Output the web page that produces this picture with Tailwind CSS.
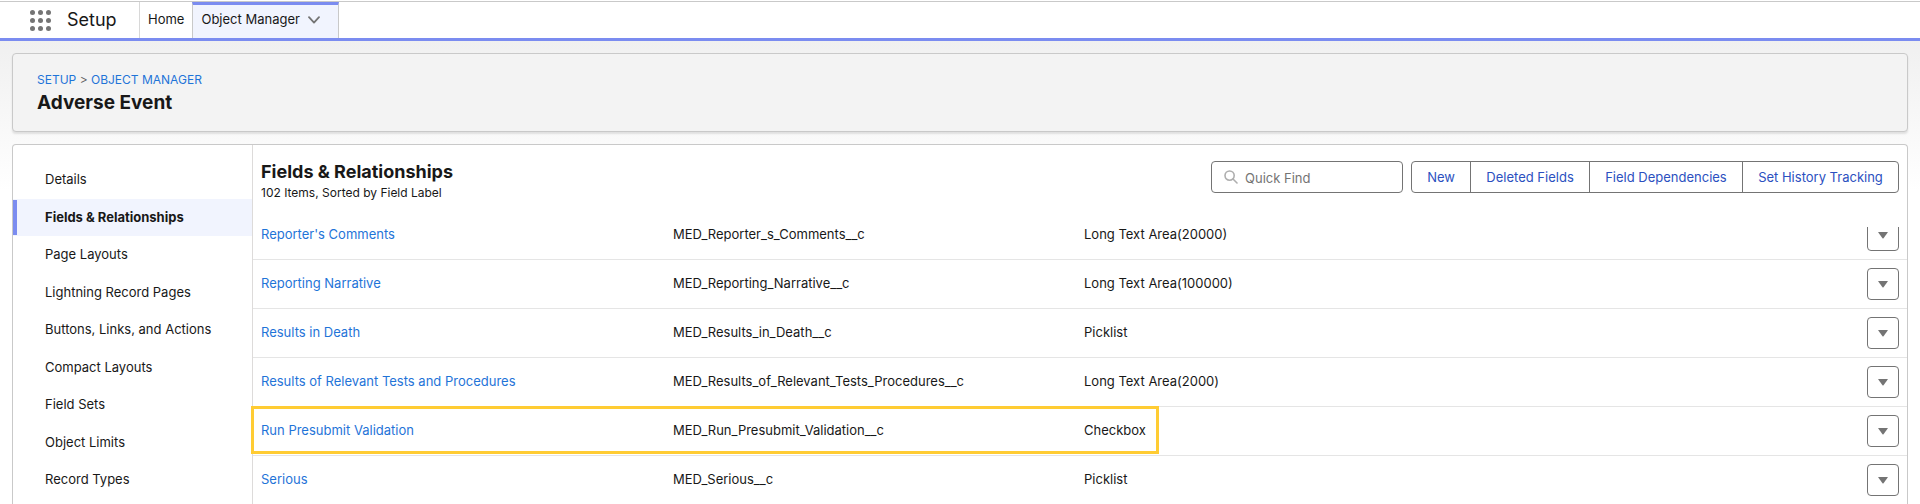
<!DOCTYPE html>
<html lang="en">
<head>
  <meta charset="UTF-8" />
  <meta name="viewport" content="width=device-width, initial-scale=1.0"/>
  <title>Object Manager | Setup</title>
  <script src="https://cdn.jsdelivr.net/npm/@tailwindcss/browser@4"></script>
</head>
<body class="h-screen overflow-hidden flex flex-col bg-white font-[Inter,sans-serif] text-[13px] leading-normal text-[#181818]">
  <!-- Global navigation -->
  <header class="flex h-[41px] shrink-0 items-stretch border-b-3 border-[#7b8cf0] bg-white">
    <div class="flex grow border-t border-[#c9c9c9] mt-px">
      <div class="flex w-[140px] items-center border-r border-[#d8d8d8] pl-[30px]">
        <button type="button" aria-label="App Launcher" class="text-[#747474]">
          <svg width="21" height="21" viewBox="0 0 21 21" fill="currentColor">
            <circle cx="2.5" cy="2.5" r="2.5"/><circle cx="10.5" cy="2.5" r="2.5"/><circle cx="18.5" cy="2.5" r="2.5"/>
            <circle cx="2.5" cy="10.5" r="2.5"/><circle cx="10.5" cy="10.5" r="2.5"/><circle cx="18.5" cy="10.5" r="2.5"/>
            <circle cx="2.5" cy="18.5" r="2.5"/><circle cx="10.5" cy="18.5" r="2.5"/><circle cx="18.5" cy="18.5" r="2.5"/>
          </svg>
        </button>
        <span class="ml-4 pb-px text-[18px]">Setup</span>
      </div>
      <nav class="flex">
        <a href="#" class="flex items-center px-2">Home</a>
        <div class="flex items-center border-x border-t-3 border-x-[#c9c9c9] border-t-[#7b8cf0] bg-[#f1f4fe] pl-2 pr-[18px] pb-[3px]">
          <a href="#">Object Manager</a>
          <button type="button" aria-label="Object Manager menu" class="ml-2 text-[#747474]">
            <svg width="12" height="8" viewBox="0 0 12 8" fill="none" stroke="currentColor" stroke-width="1.8" stroke-linecap="round" stroke-linejoin="round"><path d="M1 1.2 6 6.6 11 1.2"/></svg>
          </button>
        </div>
      </nav>
    </div>
  </header>

  <main class="flex grow flex-col gap-3 bg-linear-to-b from-[#f0f0f0] to-white to-[150px] px-3 pt-3 min-h-0">
    <!-- Page header -->
    <div class="shrink-0 rounded-[4px] border border-[#c9c9c9] bg-[#f3f3f3] px-6 pt-4 pb-[15px] shadow-[0_2px_2px_rgba(0,0,0,0.1)]">
      <div class="text-[12px] leading-5 text-[#5c5c5c]">
        <a href="#" class="text-[#1f74d8]">SETUP</a> &gt; <a href="#" class="text-[#1f74d8]">OBJECT MANAGER</a>
      </div>
      <h1 class="text-[19px] leading-[26px] font-bold">Adverse Event</h1>
    </div>

    <div class="flex shrink-0 rounded-t-[4px] border border-b-0 border-[#c9c9c9] bg-white">
      <!-- Object sections -->
      <nav class="w-60 shrink-0 border-r border-[#dddbda] py-4">
        <ul>
          <li><a href="#" class="block py-[9px] pl-8">Details</a></li>
          <li class="relative bg-[#f1f4fe]">
            <span class="absolute inset-y-px left-0 w-1 bg-[#7b8cf0]"></span>
            <a href="#" class="block py-[9px] pl-8 font-bold">Fields &amp; Relationships</a>
          </li>
          <li><a href="#" class="block py-[9px] pl-8">Page Layouts</a></li>
          <li><a href="#" class="block py-[9px] pl-8">Lightning Record Pages</a></li>
          <li><a href="#" class="block py-[9px] pl-8">Buttons, Links, and Actions</a></li>
          <li><a href="#" class="block py-[9px] pl-8">Compact Layouts</a></li>
          <li><a href="#" class="block py-[9px] pl-8">Field Sets</a></li>
          <li><a href="#" class="block py-[9px] pl-8">Object Limits</a></li>
          <li><a href="#" class="block py-[9px] pl-8">Record Types</a></li>
        </ul>
      </nav>

      <section class="min-w-0 grow">
        <div class="flex h-[82px] items-start px-2 pt-4">
          <div class="grow">
            <h2 class="text-[18px] leading-[22px] font-bold">Fields &amp; Relationships</h2>
            <p class="text-[12px] leading-5">102 Items, Sorted by Field Label</p>
          </div>
          <div class="flex h-8 w-48 items-center rounded-[4px] border border-[#747474] bg-white pl-3">
            <svg class="shrink-0 text-[#aeaeae]" width="14" height="14" viewBox="0 0 14 14" fill="none" stroke="currentColor" stroke-width="1.6" stroke-linecap="round"><circle cx="5.6" cy="5.6" r="4.6"/><path d="M9 9l4 4"/></svg>
            <input type="search" aria-label="Quick Find" placeholder="Quick Find" class="ml-[7px] h-full w-full min-w-0 pt-px outline-none placeholder:text-[#747474]">
          </div>
          <div class="ml-2 flex h-8 w-[488px] divide-x divide-[#747474] overflow-hidden rounded-[4px] border border-[#747474] text-[#2b50c0]">
            <button type="button" class="grow px-[15px] pt-px">New</button>
            <button type="button" class="grow px-[15px] pt-px">Deleted Fields</button>
            <button type="button" class="grow px-[15px] pt-px">Field Dependencies</button>
            <button type="button" class="grow px-[15px] pt-px">Set History Tracking</button>
          </div>
        </div>

        <!-- List is scrolled part way into its first visible row -->
        <div class="flow-root overflow-y-clip">
          <table class="-mt-4 w-full table-fixed border-separate border-spacing-0 text-left">
            <colgroup>
              <col class="w-[412px]">
              <col class="w-[411px]">
              <col>
              <col class="w-12">
            </colgroup>
            <tbody id="fields"></tbody>
          </table>
        </div>
      </section>
    </div>
  </main>

  <script>
    const fields = [
      ["Reporter's Comments", "MED_Reporter_s_Comments__c", "Long Text Area(20000)"],
      ["Reporting Narrative", "MED_Reporting_Narrative__c", "Long Text Area(100000)"],
      ["Results in Death", "MED_Results_in_Death__c", "Picklist"],
      ["Results of Relevant Tests and Procedures", "MED_Results_of_Relevant_Tests_Procedures__c", "Long Text Area(2000)"],
      ["Run Presubmit Validation", "MED_Run_Presubmit_Validation__c", "Checkbox"],
      ["Serious", "MED_Serious__c", "Picklist"],
    ];
    const highlighted = "MED_Run_Presubmit_Validation__c";

    document.getElementById("fields").innerHTML = fields.map(([label, name, type]) => `
      <tr class="h-[49px]">
        <td class="relative border-b border-[#e5e5e5] px-2">
          <a href="#" class="text-[#1f74d8]">${label}</a>
          ${name === highlighted ? `<span class="pointer-events-none absolute -top-px -left-0.5 h-12 w-[908px] border-3 border-[#ffcc33]"></span>` : ""}
        </td>
        <td class="border-b border-[#e5e5e5] px-2">${name}</td>
        <td class="border-b border-[#e5e5e5] px-2">${type}</td>
        <td class="border-b border-[#e5e5e5] pl-2">
          <button type="button" aria-label="Actions for ${label}" class="flex size-8 items-center justify-center rounded-[4px] border border-[#747474] bg-white text-[#747474]">
            <svg width="10" height="7" viewBox="0 0 10 7" fill="currentColor"><path d="M.6 0h8.8q.6 0 .3.6L5.5 6.2q-.5.6-1 0L.3.6Q0 0 .6 0z"/></svg>
          </button>
        </td>
      </tr>
    `).join("");
  </script>
</body>
</html>
